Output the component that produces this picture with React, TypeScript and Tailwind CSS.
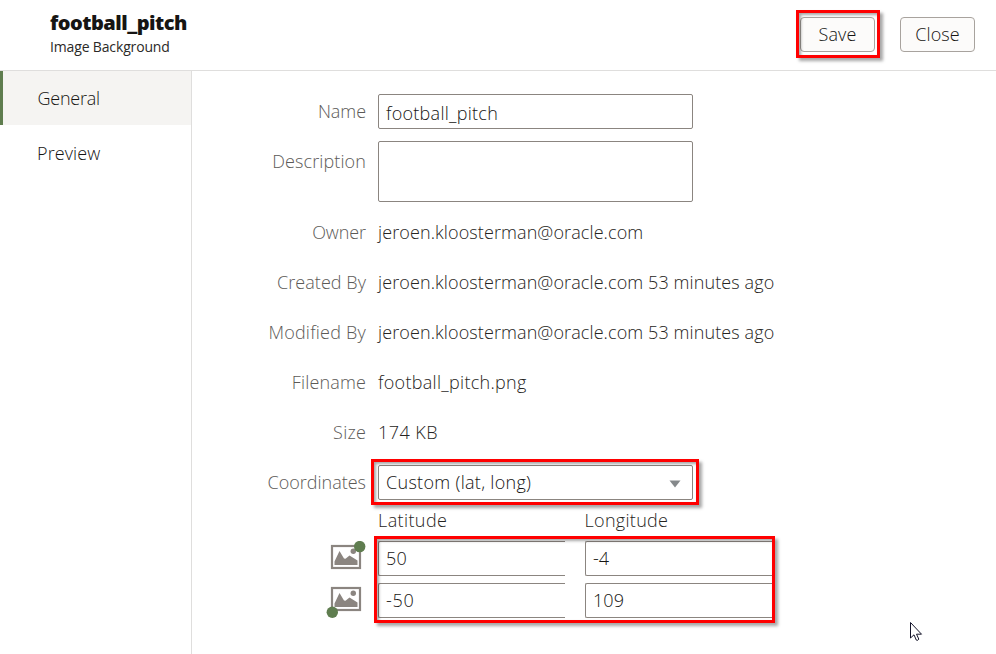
import React from "react";

function Highlight({ className }: { className: string }) {
  return (
    <div
      className={`pointer-events-none absolute border-3 border-[#ff0000] shadow-[3px_3px_3px_rgba(0,0,0,0.35),inset_2px_2px_3px_rgba(0,0,0,0.35)] ${className}`}
    />
  );
}

function Row({ label, tracking, children }: { label: string; tracking: string; children: React.ReactNode }) {
  return (
    <div className="flex h-[50px] items-center">
      <Label text={label} tracking={tracking} />
      {children}
    </div>
  );
}

function Label({ text, tracking }: { text: string; tracking: string }) {
  return (
    <div className="mr-3 flex w-[174px] shrink-0 justify-end whitespace-nowrap text-[#5c5a57]">
      <span className={tracking}>{text}</span>
    </div>
  );
}

function ImageCorner({ corner }: { corner: "top" | "bottom" }) {
  return (
    <svg width="40" height="35" viewBox="0 0 40 35" className="shrink-0">
      <rect x="6" y="5" width="28" height="22" fill="#fff" stroke="#8b8580" strokeWidth="2.200" />
      <path d="M8.500 24v-3.500l5-10.500 4.500 7.500 1.500 0.300 4-3.300 8 5V24z" fill="#8b8580" />
      <circle cx="27.300" cy="10.300" r="2.700" fill="#8b8580" />
      {corner === "top" ? (
        <circle cx="33.700" cy="5.600" r="5.700" fill="#5f7d4f" />
      ) : (
        <circle cx="6.300" cy="29.300" r="5.700" fill="#5f7d4f" />
      )}
    </svg>
  );
}

function CoordInput({ value, tracking }: { value: string; tracking: string }) {
  return (
    <div className="flex h-[35px] w-[187px] items-center rounded-l-[2px] border border-r-0 border-[#8b8580] bg-white pb-px pl-[7px] text-[#161513]">
      <span className={tracking}>{value}</span>
    </div>
  );
}

export default function App() {
  return (
    <div className="relative flex h-[654px] w-[996px] flex-col overflow-hidden bg-white font-['Open_Sans','Noto_Sans',sans-serif] text-[18px] leading-6 font-light text-[#262422]">
      <header className="flex h-[71px] shrink-0 items-start justify-between border-b border-[#dfdedd] pr-[21px] pl-[50px] text-[#161513]">
        <div className="flex flex-col pt-[11px]">
          <h1 className="text-[20px] leading-6 font-extrabold"><span className="tracking-[-0.5px]">football_pitch</span></h1>
          <p className="text-[14px] leading-6 font-normal text-[#2b2927]"><span className="tracking-[-0.15px]">Image Background</span></p>
        </div>
        <div className="flex gap-[25px] pt-[17px]">
          <button className="relative h-[35px] w-[75px] rounded-[4px] border border-[#a8a39e] bg-[#fcfbfa] pb-0.5">
            <span className="tracking-[0.1px]">Save</span>
            <Highlight className="-top-2 -left-[5px] h-12 w-[84px]" />
          </button>
          <button className="h-[35px] w-[75px] rounded-[4px] border border-[#a8a39e] bg-[#fcfbfa] pb-0.5">
            <span className="tracking-[0.1px]">Close</span>
          </button>
        </div>
      </header>

      <div className="flex flex-1">
        <nav className="w-[192px] shrink-0 border-r border-[#dfdedd] text-[#161513]">
          <div className="flex h-[54px] items-center border-l-3 border-[#5f7d4f] bg-[#f5f4f2] pl-[34.500px]">
            <span className="tracking-[-0.25px]">General</span>
          </div>
          <div className="flex h-[56px] items-center pl-[37px]">
            <span className="tracking-[0.1px]">Preview</span>
          </div>
        </nav>

        <main className="flex flex-col pt-[23px]">
          <div className="flex h-[35px] items-center">
            <div className="pb-0.5"><Label text="Name" tracking="tracking-[-0.05px]" /></div>
            <div className="flex h-full w-[315px] items-center rounded-[2px] border border-[#8b8580] pt-0.5 pl-[7px] text-[#161513]">
              <span className="tracking-[0.27px]">football_pitch</span>
            </div>
          </div>
          <div className="mt-3 mb-[5px] flex h-[61px] items-start">
            <div className="pt-2"><Label text="Description" tracking="tracking-[0.1px]" /></div>
            <div className="h-full w-[315px] rounded-[2px] border border-[#8b8580]" />
          </div>
          <Row label="Owner" tracking="tracking-[-0.1px]"><span className="tracking-[0.1px]">jeroen.kloosterman@oracle.com</span></Row>
          <Row label="Created By" tracking="tracking-[0.05px]"><span className="tracking-[0.1px]">jeroen.kloosterman@oracle.com 53 minutes ago</span></Row>
          <Row label="Modified By" tracking="tracking-[0.22px]"><span className="tracking-[0.1px]">jeroen.kloosterman@oracle.com 53 minutes ago</span></Row>
          <Row label="Filename" tracking="tracking-[0.15px]"><span className="tracking-[0.3px]">football_pitch.png</span></Row>
          <Row label="Size" tracking="tracking-[0.2px]"><span className="tracking-[0.45px]">174 KB</span></Row>
          <Row label="Coordinates" tracking="tracking-[0px]">
            <div className="relative flex h-[35px] w-[315px] items-center justify-between rounded-[2px] border border-[#8b8580] pr-[11px] pl-[7px] text-[#161513]">
              <span className="tracking-[0.3px]">Custom (lat, long)</span>
              <svg width="12" height="8" viewBox="0 0 12 8" className="mt-1"><path d="M0.500 0.500h11L6 7.500z" fill="#85898b" /></svg>
              <Highlight className="-top-[7px] -left-2 h-[46px] w-[328px]" />
            </div>
          </Row>
          <div className="flex h-[34px] items-center pb-2 pl-[186px]">
            <span className="w-[206.500px]"><span className="tracking-[0.4px]">Latitude</span></span>
            <span className="tracking-[0.3px]">Longitude</span>
          </div>
          <div className="flex pl-[134px]">
            <div className="flex flex-col gap-[7px]">
              <ImageCorner corner="top" />
              <ImageCorner corner="bottom" />
            </div>
            <div className="relative ml-3 grid grid-cols-2 gap-x-5 gap-y-[7px]">
              <CoordInput value="50" tracking="tracking-[0.3px]" />
              <CoordInput value="-4" tracking="tracking-[0px]" />
              <CoordInput value="-50" tracking="tracking-[0.7px]" />
              <CoordInput value="109" tracking="tracking-[0.1px]" />
              <Highlight className="-top-[5px] -left-1 h-[87px] w-[401px]" />
            </div>
          </div>
        </main>
      </div>

      <svg width="13" height="20" viewBox="0 0 13 20" className="absolute top-[622px] left-[910px]">
        <path d="M0.500 0.500v15.500l3.500-3.200 2.300 5.300q1.500 1 2.500-1l-2.300-4.900h5z" fill="#fff" stroke="#15152a" strokeWidth="1" />
      </svg>
    </div>
  );
}
